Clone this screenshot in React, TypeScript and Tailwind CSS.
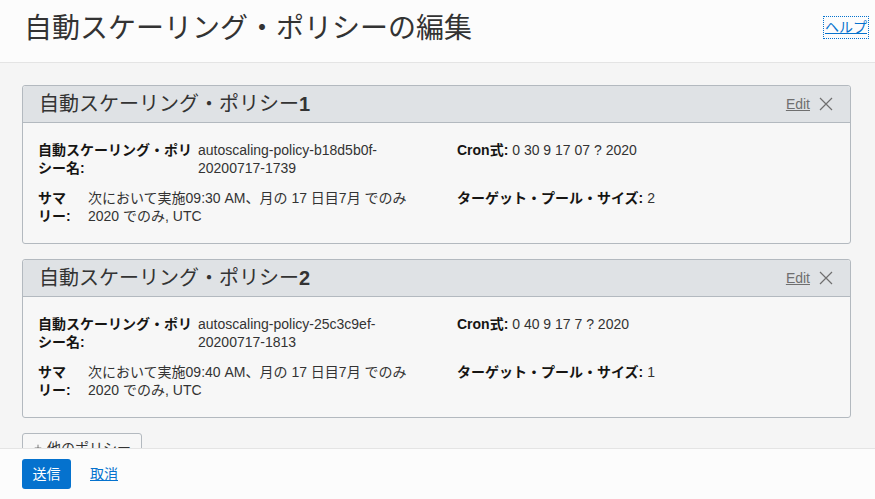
import { Plus } from "lucide-react";

const font = { fontFamily: '"Liberation Sans", "Noto Sans CJK JP", sans-serif' };

type Policy = {
  index: number;
  name: string;
  summary: string;
  cron: string;
  size: number;
};

const policies: Policy[] = [
  {
    index: 1,
    name: "autoscaling-policy-b18d5b0f-20200717-1739",
    summary: "次において実施09:30 AM、月の 17 日目7月 でのみ 2020 でのみ, UTC",
    cron: "0 30 9 17 07 ? 2020",
    size: 2,
  },
  {
    index: 2,
    name: "autoscaling-policy-25c3c9ef-20200717-1813",
    summary: "次において実施09:40 AM、月の 17 日目7月 でのみ 2020 でのみ, UTC",
    cron: "0 40 9 17 7 ? 2020",
    size: 1,
  },
];

function CloseIcon() {
  return (
    <svg width="14" height="14" viewBox="0 0 14 14" className="text-[#6f6f6f]">
      <path d="M1 1 L13 13 M13 1 L1 13" stroke="currentColor" strokeWidth="1.2" fill="none" />
    </svg>
  );
}

function PolicyCard({ p }: { p: Policy }) {
  return (
    <div className="border border-[#b3b9bf] rounded-[3px] bg-[#f7f7f7]">
      <div className="h-[37px] flex items-center justify-between pl-[16px] pr-[17px] bg-[#dfe2e5] border-b border-[#b3b9bf] rounded-t-[3px]">
        <h2 className="text-[20px] leading-none text-[#333]">
          自動スケーリング・ポリシー<span className="font-bold">{p.index}</span>
        </h2>
        <div className="flex items-center gap-[9px]">
          <a href="#" className="text-[14px] text-[#6f6f6f] underline">Edit</a>
          <CloseIcon />
        </div>
      </div>
      <div className="grid grid-cols-[419px_1fr] gap-y-[12px] pl-[15px] pt-[18px] pb-[18px] text-[14px] leading-[18px] text-[#333]">
        <div className="flex">
          <span className="w-[156px] mr-[4px] font-bold text-[#161513]">自動スケーリング・ポリシー名:</span>
          <span className="w-[236px]">{p.name}</span>
        </div>
        <div>
          <span className="font-bold text-[#161513]">Cron式:</span> {p.cron}
        </div>
        <div className="flex">
          <span className="w-[36px] shrink-0 mr-[14px] font-bold text-[#161513]">サマリー:</span>
          <span className="w-[332px]">{p.summary}</span>
        </div>
        <div>
          <span className="font-bold text-[#161513]">ターゲット・プール・サイズ:</span> {p.size}
        </div>
      </div>
    </div>
  );
}

export default function App() {
  return (
    <div style={font} className="h-[499px] w-full flex flex-col bg-[#f5f5f5] overflow-hidden">
      <header className="h-[63px] shrink-0 flex items-center justify-between pl-[24px] pr-[7px] bg-[#fcfcfc] border-b border-[#e4e4e4]">
        <h1 className="text-[28px] leading-none text-[#333] pb-[4px]">自動スケーリング・ポリシーの編集</h1>
        <a href="#" className="text-[14px] text-[#0572ce] underline outline-1 outline-dotted outline-[#0572ce] px-[1px] mb-[8px]">
          ヘルプ
        </a>
      </header>
      <main className="flex-1 overflow-hidden pt-[22px] pl-[22px] pr-[24px] flex flex-col gap-[15px]">
        {policies.map((p) => (
          <PolicyCard key={p.index} p={p} />
        ))}
        <div>
          <button className="h-[30px] px-[10px] flex items-center gap-[4px] border border-[#b3b9bf] rounded-[3px] bg-[#f7f7f7] text-[14px] text-[#333]">
            <Plus size={10} strokeWidth={1.5} />
            他のポリシー
          </button>
        </div>
      </main>
      <footer className="h-[51px] shrink-0 flex items-center gap-[19px] pl-[22px] bg-[#fcfcfc] border-t border-[#e4e4e4]">
        <button className="h-[30px] w-[49px] rounded-[3px] bg-[#0572ce] text-white text-[14px]">送信</button>
        <a href="#" className="text-[14px] text-[#0572ce] underline">取消</a>
      </footer>
    </div>
  );
}
